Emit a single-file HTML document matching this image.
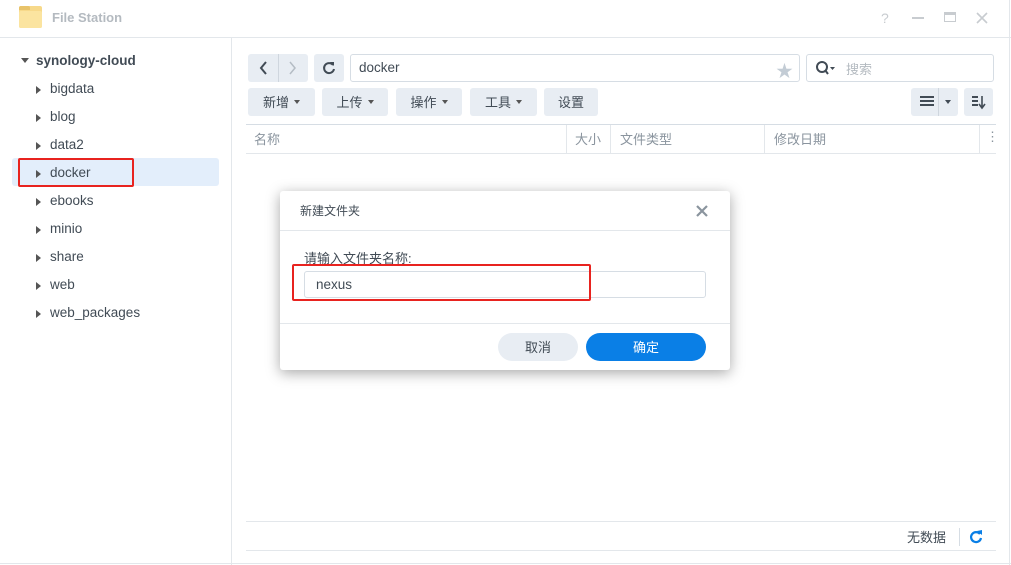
<!DOCTYPE html>
<html><head><meta charset="utf-8"><style>
*{box-sizing:border-box;margin:0;padding:0}
body{width:1011px;height:565px;background:#fff;font-family:"Liberation Sans","Noto Sans CJK SC",sans-serif;position:relative;overflow:hidden;color:#414b55}
.a{position:absolute}
.btn{position:absolute;background:#e8edf3;border-radius:3px;font-size:13px;color:#414b55;display:flex;align-items:center;justify-content:center;line-height:1}
.tri{display:inline-block;width:0;height:0;border-left:3.5px solid transparent;border-right:3.5px solid transparent;border-top:4px solid #555;margin-left:5px}
.item{position:absolute;left:36px;font-size:13.5px;color:#414b55}
.item:before{content:"";position:absolute;left:0;top:5px;border-top:4px solid transparent;border-bottom:4px solid transparent;border-left:5px solid #555}
.item span{margin-left:14px}
.hd{position:absolute;top:129px;font-size:13px;color:#8a949e}
</style></head><body>
<div class="a" style="left:19px;top:6px;width:23px;height:22px;background:#f7d98a;border-radius:2px"></div>
<div class="a" style="left:19px;top:6px;width:11px;height:4px;background:#e8c36a;border-radius:2px 2px 0 0"></div>
<div class="a" style="left:19px;top:11px;width:23px;height:17px;background:#fbe4a0;border-radius:2px"></div>
<div class="a" style="left:52px;top:10px;font-size:13px;font-weight:bold;color:#b4bac0">File Station</div>
<div class="a" style="left:881px;top:10px;font-size:14px;color:#c8ccd0">?</div>
<div class="a" style="left:912px;top:17px;width:12px;height:2px;background:#c8ccd0"></div>
<div class="a" style="left:944px;top:12px;width:12px;height:10px;border:1.5px solid #c8ccd0;border-top-width:3px"></div>
<svg class="a" style="left:976px;top:12px" width="12" height="12"><path d="M1 1 L11 11 M11 1 L1 11" stroke="#c8ccd0" stroke-width="1.6"/></svg>
<div class="a" style="left:0;top:37px;width:1011px;height:1px;background:#e3e7eb"></div>
<div class="a" style="left:1009px;top:0;width:1px;height:565px;background:#e3e7eb"></div>
<div class="a" style="left:231px;top:38px;width:1px;height:527px;background:#e3e7eb"></div>
<div class="a" style="left:21px;top:58px;border-left:4px solid transparent;border-right:4px solid transparent;border-top:5px solid #555"></div>
<div class="a" style="left:36px;top:53px;font-size:13.5px;font-weight:bold;color:#414b55">synology-cloud</div>
<div class="a" style="left:12px;top:158px;width:207px;height:28px;background:#e3eefb;border-radius:3px"></div>
<div class="item" style="top:81px"><span>bigdata</span></div>
<div class="item" style="top:109px"><span>blog</span></div>
<div class="item" style="top:137px"><span>data2</span></div>
<div class="item" style="top:165px"><span>docker</span></div>
<div class="item" style="top:193px"><span>ebooks</span></div>
<div class="item" style="top:221px"><span>minio</span></div>
<div class="item" style="top:249px"><span>share</span></div>
<div class="item" style="top:277px"><span>web</span></div>
<div class="item" style="top:305px"><span>web_packages</span></div>
<div class="a" style="left:18px;top:158px;width:116px;height:29px;border:2px solid #e8231f;border-radius:2px"></div>
<div class="btn" style="left:248px;top:54px;width:60px;height:28px"></div>
<div class="a" style="left:278px;top:54px;width:1px;height:28px;background:#cfd6de"></div>
<svg class="a" style="left:256px;top:59px" width="16" height="18"><path d="M10 3 L5 9 L10 15" stroke="#414b55" stroke-width="2" fill="none"/></svg>
<svg class="a" style="left:285px;top:59px" width="16" height="18"><path d="M5 3 L10 9 L5 15" stroke="#b4bcc4" stroke-width="1.5" fill="none"/></svg>
<div class="btn" style="left:314px;top:54px;width:30px;height:28px"></div>
<svg class="a" style="left:321px;top:60px" width="16" height="16"><path d="M12 5 A5 5 0 1 0 13 9" stroke="#414b55" stroke-width="2" fill="none"/><path d="M9 2 L13 6 L13 2Z" fill="#414b55"/></svg>
<div class="a" style="left:350px;top:54px;width:450px;height:28px;border:1px solid #d6dde4;border-radius:3px"></div>
<div class="a" style="left:359px;top:60px;font-size:13.5px;color:#414b55">docker</div>
<div class="a" style="left:776px;top:57px;font-size:17px;color:#c3ccd5">★</div>
<div class="a" style="left:806px;top:54px;width:188px;height:28px;border:1px solid #d6dde4;border-radius:3px"></div>
<svg class="a" style="left:815px;top:59px" width="20" height="18"><circle cx="7" cy="8" r="5" stroke="#414b55" stroke-width="2" fill="none"/><path d="M10 11 L13 15" stroke="#414b55" stroke-width="2"/><path d="M15 8 L20 8 L17.5 11Z" fill="#414b55"/></svg>
<div class="a" style="left:846px;top:59px;font-size:13px;color:#b4bac0">搜索</div>
<div class="btn" style="left:248px;top:88px;width:67px;height:28px">新增<i class="tri"></i></div>
<div class="btn" style="left:322px;top:88px;width:66px;height:28px">上传<i class="tri"></i></div>
<div class="btn" style="left:396px;top:88px;width:66px;height:28px">操作<i class="tri"></i></div>
<div class="btn" style="left:470px;top:88px;width:67px;height:28px">工具<i class="tri"></i></div>
<div class="btn" style="left:544px;top:88px;width:54px;height:28px">设置</div>
<div class="btn" style="left:911px;top:88px;width:47px;height:28px"></div>
<div class="a" style="left:938px;top:88px;width:1px;height:28px;background:#cfd6de"></div>
<div class="a" style="left:920px;top:96px;width:14px;height:10px;border-top:2px solid #414b55;border-bottom:2px solid #414b55"></div>
<div class="a" style="left:920px;top:100px;width:14px;height:2px;background:#414b55"></div>
<div class="a" style="left:945px;top:100px;border-left:3.5px solid transparent;border-right:3.5px solid transparent;border-top:4px solid #414b55"></div>
<div class="btn" style="left:964px;top:88px;width:29px;height:28px"></div>
<svg class="a" style="left:971px;top:94px" width="16" height="16"><path d="M1 3 H7 M1 7 H7 M1 11 H7" stroke="#414b55" stroke-width="2"/><path d="M11 2 V13 M8 10 L11 14 L14 10" stroke="#414b55" stroke-width="1.6" fill="none"/></svg>
<div class="a" style="left:246px;top:124px;width:750px;height:1px;background:#d6dde4"></div>
<div class="a" style="left:246px;top:153px;width:750px;height:1px;background:#e3e7eb"></div>
<div class="hd" style="left:254px">名称</div>
<div class="a" style="left:566px;top:125px;width:1px;height:28px;background:#e3e7eb"></div>
<div class="hd" style="left:575px">大小</div>
<div class="a" style="left:610px;top:125px;width:1px;height:28px;background:#e3e7eb"></div>
<div class="hd" style="left:620px">文件类型</div>
<div class="a" style="left:764px;top:125px;width:1px;height:28px;background:#e3e7eb"></div>
<div class="hd" style="left:774px">修改日期</div>
<div class="a" style="left:979px;top:125px;width:1px;height:28px;background:#e3e7eb"></div>
<div class="hd" style="left:986px">⋮</div>
<div class="a" style="left:246px;top:521px;width:750px;height:1px;background:#e3e7eb"></div>
<div class="a" style="left:246px;top:550px;width:750px;height:1px;background:#e3e7eb"></div>
<div class="a" style="left:907px;top:527px;font-size:13px;color:#414b55">无数据</div>
<div class="a" style="left:959px;top:528px;width:1px;height:18px;background:#d6dde4"></div>
<svg class="a" style="left:968px;top:529px" width="16" height="16"><path d="M12 5 A5 5 0 1 0 13 9" stroke="#0a7fe6" stroke-width="2.2" fill="none"/><path d="M9 2 L14 6 L14 1Z" fill="#0a7fe6"/></svg>
<div class="a" style="left:0;top:563px;width:1011px;height:1px;background:#e3e7eb"></div>
<div class="a" style="left:280px;top:191px;width:450px;height:179px;background:#fff;border-radius:3px;box-shadow:0 3px 14px rgba(0,0,0,0.35)"></div>
<div class="a" style="left:300px;top:202px;font-size:12px;color:#414b55">新建文件夹</div>
<svg class="a" style="left:696px;top:205px" width="12" height="12"><path d="M1 1 L11 11 M11 1 L1 11" stroke="#8a949e" stroke-width="2.2"/></svg>
<div class="a" style="left:280px;top:230px;width:450px;height:1px;background:#e3e7eb"></div>
<div class="a" style="left:304px;top:248px;font-size:13px;color:#414b55">请输入文件夹名称:</div>
<div class="a" style="left:304px;top:271px;width:402px;height:27px;border:1px solid #d6dde4;border-radius:3px"></div>
<div class="a" style="left:316px;top:277px;font-size:13.5px;color:#414b55">nexus</div>
<div class="a" style="left:292px;top:264px;width:299px;height:37px;border:2px solid #e8231f;border-radius:2px"></div>
<div class="a" style="left:280px;top:323px;width:450px;height:1px;background:#e3e7eb"></div>
<div class="btn" style="left:498px;top:333px;width:80px;height:28px;border-radius:14px">取消</div>
<div class="btn" style="left:586px;top:333px;width:120px;height:28px;border-radius:14px;background:#0a7fe6;color:#fff">确定</div>
</body></html>
